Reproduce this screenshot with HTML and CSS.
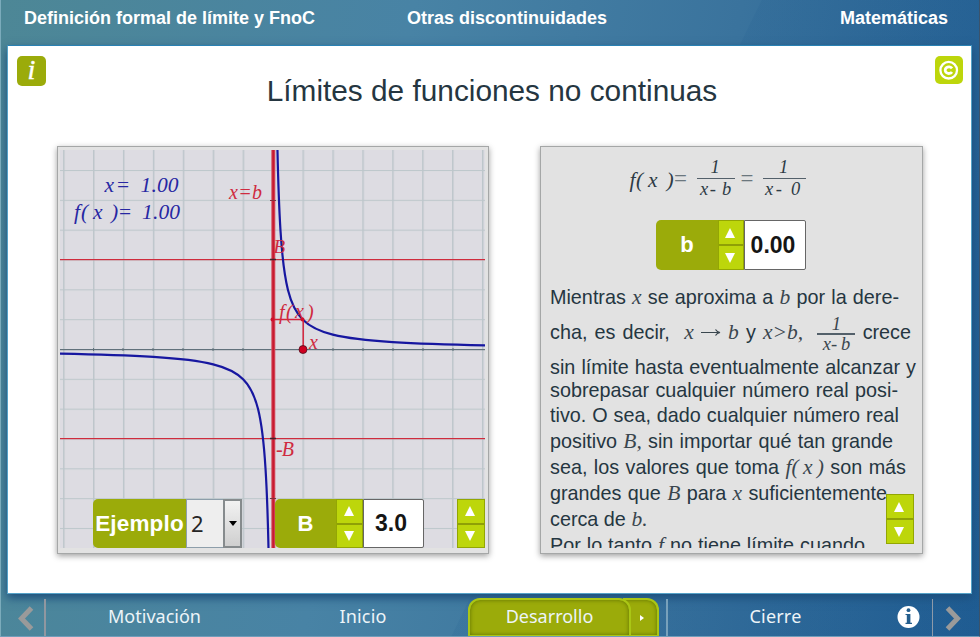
FILE: index.html
```html
<!DOCTYPE html>
<html lang="es">
<head>
<meta charset="utf-8">
<title>Límites de funciones no continuas</title>
<link rel="stylesheet" href="styles.css">
</head>
<body>
<div class="app">
  <header class="top">
    <span class="top-left">Definición formal de límite y FnoC</span>
    <span class="top-mid">Otras discontinuidades</span>
    <span class="top-right">Matemáticas</span>
  </header>
  <main class="page">
    <div class="heading">
      <span class="info">i</span>
      <h1>Límites de funciones no continuas</h1>
      <span class="copy"><svg width="28" height="28" viewBox="0 0 28 28"><circle cx="13.7" cy="14.2" r="8.3" fill="none" stroke="#fff" stroke-width="2.3"/><path d="M17 12.4A3.7 3.3 0 1 0 17 16" fill="none" stroke="#fff" stroke-width="2.8"/></svg></span>
    </div>
    <div class="panels">
      <section class="panel plot">
        <svg class="graph" width="425" height="398" viewBox="0 0 425 398">
          <defs>
            <pattern id="grid" x="3.1" y="20" width="29.92" height="29.83" patternUnits="userSpaceOnUse">
              <path d="M0 .5H30" stroke="#bec8cc" stroke-width="1.2"/><path d="M.7 0V30" stroke="#bdc6cb" stroke-width="1.6"/>
            </pattern>
          </defs>
          <rect width="425" height="398" fill="#dddce2"/>
          <rect width="425" height="398" fill="url(#grid)"/>
          <rect x="0" y="199" width="425" height="1.200" fill="#61717b"/>
          <path d="M33.500 198v3M63 198v3M93 198v3M123 198v3M153 198v3M183 198v3M273 198v3M303 198v3M333 198v3M363 198v3M393 198v3" stroke="#61717b"/>
          <rect x="0" y="109" width="425" height="1.200" fill="#cf2c3d"/>
          <rect x="0" y="288" width="425" height="1.200" fill="#cf2c3d"/>
          <g transform="matrix(29.9 0 0 -29.8 213 199.5)" fill="none" stroke="#1717a0" stroke-width="2.2">
            <path vector-effect="non-scaling-stroke" d="M.1493 6.7Q.1875 5 .25 4Q.3333 2.6667 .5 2Q.6667 1.3333 1 1Q1.3333 .6667 2 .5Q2.6667 .3333 4 .25Q5.143 .1786 7.2 .1389"/>
            <path vector-effect="non-scaling-stroke" d="M-.1493 -6.7Q-.1875 -5 -.25 -4Q-.3333 -2.6667 -.5 -2Q-.6667 -1.3333 -1 -1Q-1.3333 -.6667 -2 -.5Q-2.6667 -.3333 -4 -.25Q-5.143 -.1786 -7.2 -.1389"/>
          </g>
          <path d="M213.300 0V398" stroke="#d34f60" stroke-width="4"/>
          <path d="M213.300 0V398" stroke="#c81a30" stroke-width="2"/>
          <path d="M210 50.500h6M210 348.500h6" stroke="#80303e"/>
          <path d="M210 109.500h6M210 288.500h6" stroke="#41202a" stroke-width="1.4"/>
          <path d="M213 169.500H243.200V199" fill="none" stroke="#d3243c" stroke-width="1.5"/>
          <circle cx="212.500" cy="169.500" r="2" fill="#d0102c"/><circle cx="242.500" cy="169.500" r="2" fill="#d0102c"/>
          <circle cx="243" cy="199.500" r="4" fill="#cf0020" stroke="#501020" stroke-width=".8"/>
          <g class="blue">
            <text x="44.500" y="41.500">x</text><text x="57" y="41.500" class="eq">=</text><text x="80.500" y="41.500" textLength="38">1.00</text>
            <text x="14" y="69">f</text><text x="21" y="69">(</text><text x="33" y="69">x</text><text x="51" y="69">)</text><text x="59" y="69" class="eq">=</text><text x="82" y="69" textLength="38">1.00</text>
          </g>
          <g class="red">
            <text x="169" y="48.500" textLength="33">x=b</text>
            <text x="213.500" y="103" class="cap">B</text>
            <text x="219" y="169">f</text><text x="226" y="169">(</text><text x="235" y="168">x</text><text x="247" y="169">)</text>
            <text x="249" y="198.500">x</text>
            <text x="216" y="305.500" textLength="18">-B</text>
          </g>
        </svg>
        <div class="controls">
          <div class="control select"><b class="label">Ejemplo</b><span class="option">2</span><span class="drop"></span></div>
          <div class="control number"><b class="label">B</b><span class="spin"><i class="up"></i><i class="down"></i></span><b class="value">3.0</b></div>
          <span class="spin lone"><i class="up"></i><i class="down"></i></span>
        </div>
      </section>
      <section class="panel text">
        <svg class="formula" width="190" height="50" viewBox="0 0 190 50">
          <g class="dark">
            <text x="4.500" y="31">f</text><text x="11" y="31">(</text><text x="23" y="31">x</text><text x="41.500" y="31">)</text><text x="49" y="30" class="eq">=</text>
            <text x="85.500" y="17" class="s">1</text><text x="75" y="38.500" class="s" textLength="16">x-</text><text x="97" y="38.500" class="s">b</text>
            <text x="115.500" y="30" class="eq">=</text>
            <text x="154" y="17" class="s">1</text><text x="140" y="38.500" class="s" textLength="17">x-</text><text x="166" y="38.500" class="s">0</text>
          </g>
          <path d="M72 22.500H110M138 22.500H181" stroke="#53606a" stroke-width="1.1"/>
        </svg>
        <div class="control number param"><b class="label">b</b><span class="spin"><i class="up"></i><i class="down"></i></span><b class="value">0.00</b></div>
        <div class="prose">
          <p class="line l1">Mientras <em>x</em> se aproxima a <em>b</em> por la dere-</p>
          <p class="line l2">cha, es decir,&nbsp; <em>x</em>&nbsp;<svg class="arrow" width="20" height="9" viewBox="0 0 20 9"><path d="M0 4.500H19M14.500 1.500Q16 4 19 4.500Q16 5 14.500 7.500" fill="none" stroke="#3a464e" stroke-width="1.200"/></svg>&nbsp;<em>b</em> y <em>x&gt;b,</em>&nbsp; <span class="frac"><em>1</em><em>x-&#8239;b</em></span> crece</p>
          <p class="line l3">sin límite hasta eventualmente alcanzar y</p>
          <p class="line l4">sobrepasar cualquier número real posi-</p>
          <p class="line l5">tivo. O sea, dado cualquier número real</p>
          <p class="line l6">positivo <em>B,</em> sin importar qué tan grande</p>
          <p class="line l7">sea, los valores que toma <em>f(&#8239;x&#8239;)</em> son más</p>
          <p class="line l8">grandes que <em>B</em> para <em>x</em> suficientemente</p>
          <p class="line l9">cerca de <em>b.</em></p>
          <p class="line l10">Por lo tanto <em>f</em> no tiene límite cuando</p>
        </div>
        <span class="spin scroll"><i class="up"></i><i class="down"></i></span>
      </section>
    </div>
  </main>
  <nav class="bottom">
    <span class="arrow-cell"><svg width="38" height="37" viewBox="0 0 38 37"><path d="M28.500 9L18.500 19.500L28.500 30" fill="none" stroke="#9a9a9a" stroke-width="5"/></svg></span>
    <span class="tab t1">Motivación</span>
    <span class="tab t2">Inicio</span>
    <span class="active"><span class="tab-main">Desarrollo</span><span class="tab-more"></span></span>
    <span class="tab t3">Cierre</span>
    <span class="about"><svg width="24" height="24" viewBox="0 0 24 24"><circle cx="12.500" cy="12" r="11" fill="#fff"/><path d="M12.600 9v10" stroke="#245e8d" stroke-width="3.600"/><path d="M9.500 9.500h4M9.500 18.400h6.500" stroke="#245e8d" stroke-width="1.200"/><circle cx="12.500" cy="5.200" r="1.900" fill="#245e8d"/></svg></span>
    <span class="next"><svg width="38" height="37" viewBox="0 0 38 37"><path d="M14.500 9L24.500 19.500L14.500 30" fill="none" stroke="#9a9a9a" stroke-width="5"/></svg></span>
  </nav>
</div>
</body>
</html>
```
FILE: styles.css
```css
* { box-sizing: border-box; }
body { margin: 0; font-family: "Liberation Sans", sans-serif; color: #253641; }
p, h1 { margin: 0; }
.app {
  width: 980px; height: 637px; overflow: hidden;
  display: flex; flex-direction: column;
  border-left: 1px solid #7babbb; border-right: 1px solid #3c536b; border-bottom: 1px solid #709dba;
  background: linear-gradient(116deg, transparent 59%, rgba(20,80,135,.1) 59.1%), linear-gradient(100deg, #4d8796 0%, #4883a5 38%, #3a739d 68%, #205d93 100%);
}
.top {
  height: 45px; flex: none; display: grid; grid-template-columns: 383px 400px 1fr;
  padding: 7px 31px 0 23px; color: #fff; font-weight: bold; font-size: 18px; line-height: 22px; white-space: nowrap;
}
.top-right { text-align: right; }
.page { height: 549px; flex: none; margin: 0 7px 0 6px; background: #fff; border: 1px solid #55a2c8; border-top-color: #2981b3; box-shadow: 0 4px 9px #1c4e7b; }
.heading { height: 100px; display: flex; padding: 10px 8px 0 9px; }
.info, .copy { flex: none; width: 29px; height: 30px; border-radius: 5px; background: #9bab0a; color: #fff; }
.info { font: italic 28px/28px "Liberation Serif", serif; text-align: center; -webkit-text-stroke: .5px #fff; }
.copy { width: 28px; height: 28px; background: #bdd60b; }
.copy svg { display: block; }
h1 { flex: 1; text-align: center; font-size: 29.8px; font-weight: normal; line-height: 34px; padding: 18px 0 0 3px; }
.panels { display: grid; grid-template-columns: 432px 383px; column-gap: 51px; padding-left: 49px; }
.panel { position: relative; height: 408px; border: 1px solid #a5a7a7; background: #e2e2e2; box-shadow: 0 2px 6px rgba(0,0,0,.38); }
.plot { padding: 3px 2px; }
.graph { display: block; }
.graph text, .formula text { font-family: "Liberation Serif", serif; font-style: italic; }
.graph .eq, .formula .eq { font-style: normal; }
.blue { fill: #2727a2; font-size: 21.500px; }
.red { fill: #cf2b40; font-size: 20px; }
.red .cap { font-size: 19px; }
.dark { fill: #2d3b45; font-size: 21.500px; }
.dark .s { font-size: 18.500px; }
.dark .eq { font-size: 23px; fill: #6b777e; }
.controls { position: absolute; left: 35px; top: 352px; width: 393px; height: 49px; display: flex; }
.control { display: flex; height: 49px; }
.label { display: flex; align-items: center; justify-content: center; background: #9bab0a; color: #fff; border-radius: 5px 0 0 5px; width: 61px; font-size: 22px; }
.select { width: 149px; margin-right: 33px; }
.select .label { width: 93px; font-size: 22.500px; letter-spacing: .15px; }
.option { width: 37px; padding-left: 4px; background: #eee; border: 1px solid #8d9eaa; border-right: 0; font: 22px/46px "Noto Sans", sans-serif; color: #252525; }
.drop { width: 19px; border: 2px solid #868b8d; background: linear-gradient(#f2f2f2, #cfcfcf); display: flex; align-items: center; justify-content: center; }
.drop::after { content: ""; border: 4px solid transparent; border-top: 5px solid #000; border-bottom: 0; }
.spin { flex: none; width: 27px; height: 49px; display: flex; flex-direction: column; background: #8fa006; border: 1px solid #93a603; gap: 2px; }
.spin i { flex: 1; background: #bdd60b; display: flex; align-items: center; justify-content: center; padding-right: 2px; }
.spin i::after { content: ""; border: 5.500px solid transparent; }
.spin .up::after { border-bottom: 10px solid #fff; border-top: 0; }
.spin .down::after { border-top: 10px solid #fff; border-bottom: 0; }
.value { width: 61px; background: #fff; border: 1px solid #666; border-radius: 0 2px 2px 0; display: flex; align-items: center; justify-content: center; padding-right: 5px; font-size: 23px; color: #151515; }
.lone { margin-left: auto; margin-right: 1px; width: 28px; }
.formula { display: block; margin: 9px 0 0 84px; }
.param { margin: 14px 0 0 115px; height: 50px; width: 150px; }
.param .spin { height: 50px; width: 26px; }
.param .label { width: 62px; }
.param .value { width: 62px; padding-right: 4px; }
.prose { margin: 15px 0 0 9px; height: 263px; overflow: hidden; font-size: 19.800px; }
.line { height: 26px; line-height: 26px; white-space: nowrap; text-align-last: justify; }
.line em { font: italic 21.500px/0 "Liberation Serif", serif; color: #3a464e; }
.arrow { vertical-align: 2px; }
.l1 { width: 349px; height: 24px; line-height: 24px; }
.l2 { width: 361px; height: 47px; line-height: 47px; }
.l3 { width: 366px; height: 22px; line-height: 22px; }
.l4 { width: 348px; height: 25px; line-height: 25px; }
.l5 { width: 349px; height: 25px; line-height: 25px; }
.l6 { width: 343px; }
.l7 { width: 356px; }
.l8 { width: 337px; }
.l9 { width: 97px; }
.l10 { width: 315px; }
.frac { display: inline-flex; flex-direction: column; align-items: center; vertical-align: middle; width: 38px; line-height: 18px; text-align-last: center; }
.line .frac em { width: 38px; font-size: 18.500px; line-height: 18px; }
.frac em:first-child { border-bottom: 2px solid #53606a; }
.scroll { position: absolute; left: 345px; top: 347px; width: 28px; height: 50px; }
.bottom { flex: 1; display: flex; align-items: stretch; padding-top: 5px; color: #edf4f8; font: 18px/34px "Noto Sans", sans-serif; }
.arrow-cell { width: 45px; border-right: 2px solid #9097a0; padding-left: 2px; }
.bottom svg { display: block; }
.tab { text-align: center; }
.t1 { width: 216px; padding-left: 1px; }
.t2 { width: 201px; padding-left: 1px; letter-spacing: .2px; }
.active { display: flex; width: 191px; margin: -1px 7px 0 5px; }
.tab-main, .tab-more { background: #9bab0a; border: 2px solid #aac615; border-bottom-width: 1px; box-shadow: inset 0 0 4px #5f7200; }
.tab-main { width: 163px; border-radius: 12px 12px 0 0; text-align: center; position: relative; line-height: 32px; }
.tab-more { width: 36px; margin-left: -8px; padding-left: 3px; border-radius: 0 12px 0 0; border-left: 0; display: flex; align-items: center; justify-content: center; }
.tab-more::after { content: ""; border: 3.500px solid transparent; border-left: 4px solid #fff; border-right: 0; }
.t3 { width: 216px; border-left: 2px solid #78a1bb; padding-left: 1px; letter-spacing: .2px; }
.about { width: 50px; padding: 6px 0 0 14px; }
.next { width: 44px; border-left: 1px solid #8d9aa9; }
```
